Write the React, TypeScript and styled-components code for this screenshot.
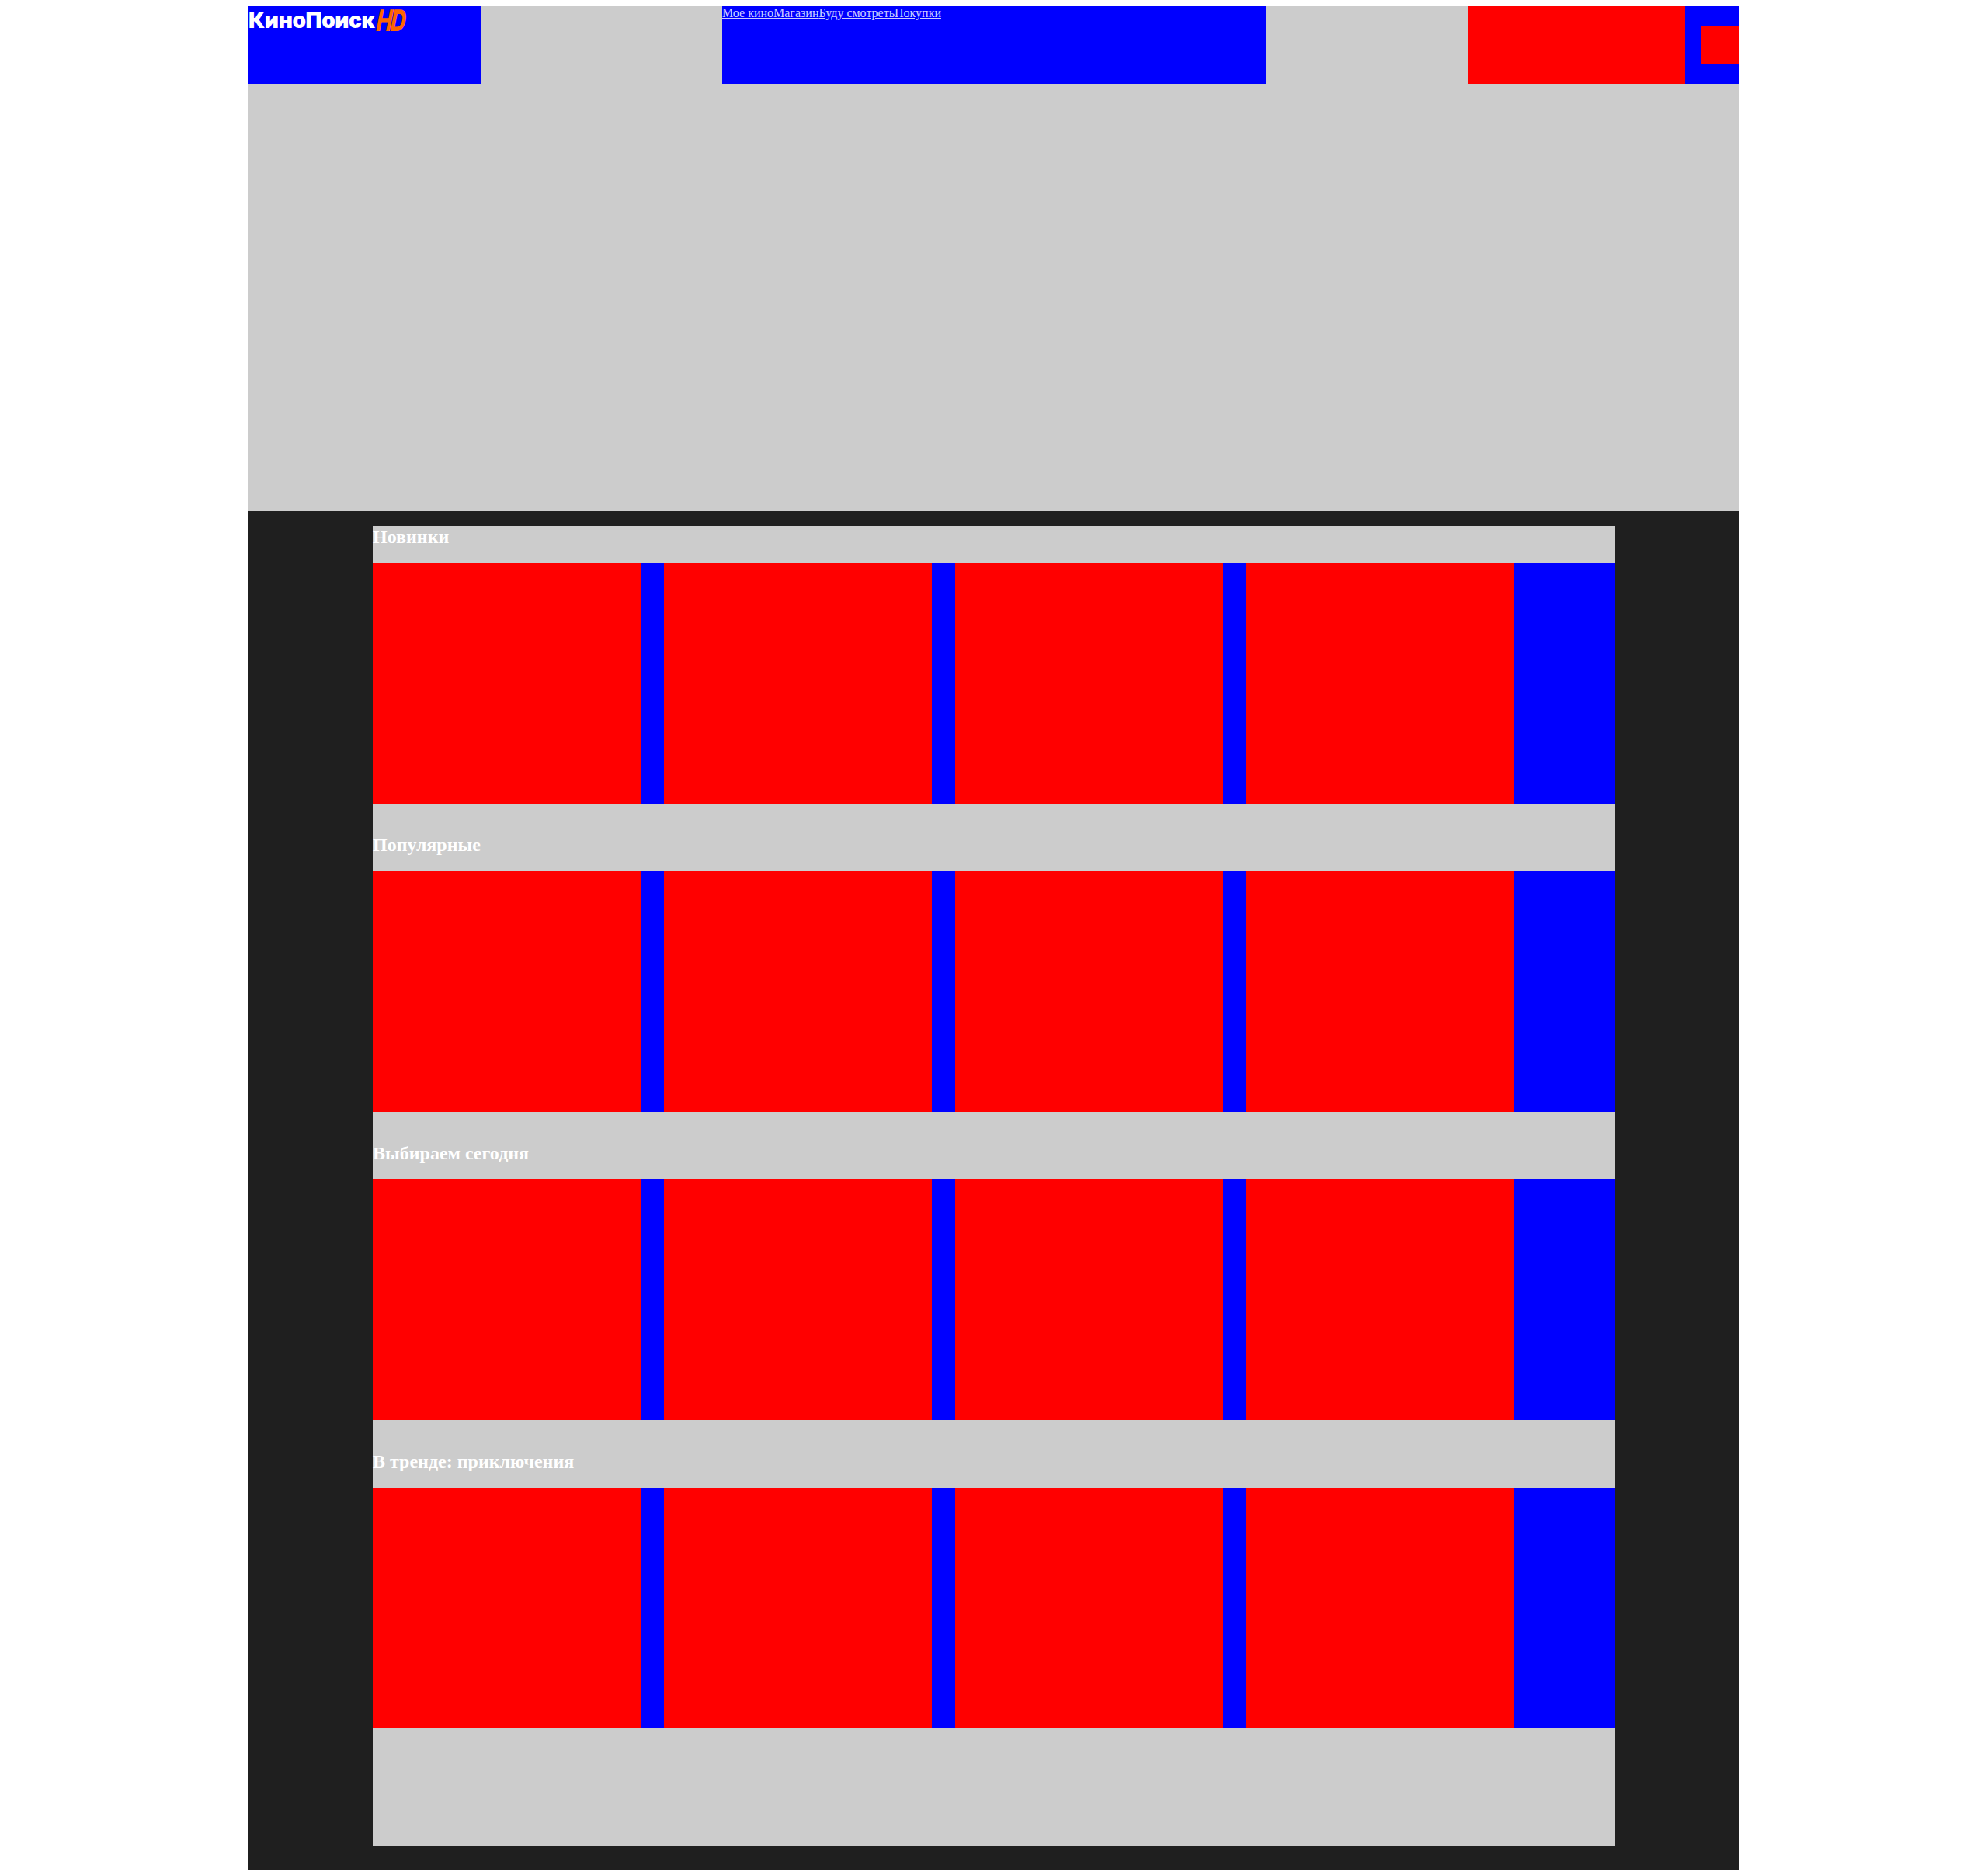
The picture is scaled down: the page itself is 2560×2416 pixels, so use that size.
import React from "react";
import styled, { createGlobalStyle } from "styled-components";

const Global = createGlobalStyle`
  body {
    margin: 8px;
    font-family: "Times New Roman", "Liberation Serif", serif;
  }
`;

const Page = styled.div`
  width: 1920px;
  margin: 0 auto;
`;

const Header = styled.header`
  display: flex;
  height: 100px;
  background: #ccc;
`;

const LogoBox = styled.a`
  display: flex;
  align-items: flex-start;
  width: 300px;
  height: 100%;
  background: #00f;
  text-decoration: none;
`;

const LogoWord = styled.span`
  font-family: Inter, "Noto Sans", sans-serif;
  font-weight: 900;
  font-size: 28px;
  line-height: 36px;
  letter-spacing: -0.4px;
  color: #fff;
`;

const LogoMark = styled.span`
  display: inline-block;
  margin-left: 3px;
  font-family: Inter, "Noto Sans", sans-serif;
  font-style: italic;
  font-weight: 800;
  font-size: 38px;
  line-height: 36px;
  letter-spacing: -3px;
  color: #f60;
  transform: scaleX(0.72) skewX(-6deg);
  transform-origin: left center;
`;

const Nav = styled.nav`
  display: flex;
  align-items: flex-start;
  width: 700px;
  margin-left: 310px;
  background: #00f;
`;

const NavLink = styled.a`
  font-size: 16px;
  color: #ccf;
  text-decoration: underline;
`;

const Actions = styled.div`
  display: flex;
  margin-left: auto;
`;

const SearchBlock = styled.div`
  width: 280px;
  background: #f00;
`;

const UserBlock = styled.div`
  display: flex;
  align-items: center;
  justify-content: flex-end;
  width: 70px;
  background: #00f;
`;

const Avatar = styled.div`
  width: 50px;
  height: 50px;
  background: #f00;
`;

const Hero = styled.section`
  height: 550px;
  background: #ccc;
`;

const Main = styled.main`
  padding: 20px 160px 30px;
  background: #1f1f1f;
`;

const Content = styled.div`
  padding-bottom: 152px;
  background: #ccc;
`;

const Section = styled.section`
  & + & {
    padding-top: 40px;
  }
`;

const Title = styled.h2`
  margin: 0;
  padding-bottom: 20px;
  font-size: 24px;
  font-weight: 700;
  color: #fff;
`;

const Row = styled.div`
  display: flex;
  gap: 30px;
  background: #00f;
`;

const Card = styled.div`
  width: 345px;
  height: 310px;
  background: #f00;
`;

const navItems = ["Мое кино", "Магазин", "Буду смотреть", "Покупки"];
const sections = ["Новинки", "Популярные", "Выбираем сегодня", "В тренде: приключения"];

export default function App() {
  return (
    <>
      <Global />
      <Page>
        <Header>
          <LogoBox href="#">
            <LogoWord>КиноПоиск</LogoWord>
            <LogoMark>HD</LogoMark>
          </LogoBox>
          <Nav>
            {navItems.map((item) => (
              <NavLink href="#" key={item}>
                {item}
              </NavLink>
            ))}
          </Nav>
          <Actions>
            <SearchBlock />
            <UserBlock>
              <Avatar />
            </UserBlock>
          </Actions>
        </Header>
        <Hero />
        <Main>
          <Content>
            {sections.map((title) => (
              <Section key={title}>
                <Title>{title}</Title>
                <Row>
                  {[0, 1, 2, 3].map((i) => (
                    <Card key={i} />
                  ))}
                </Row>
              </Section>
            ))}
          </Content>
        </Main>
      </Page>
    </>
  );
}
